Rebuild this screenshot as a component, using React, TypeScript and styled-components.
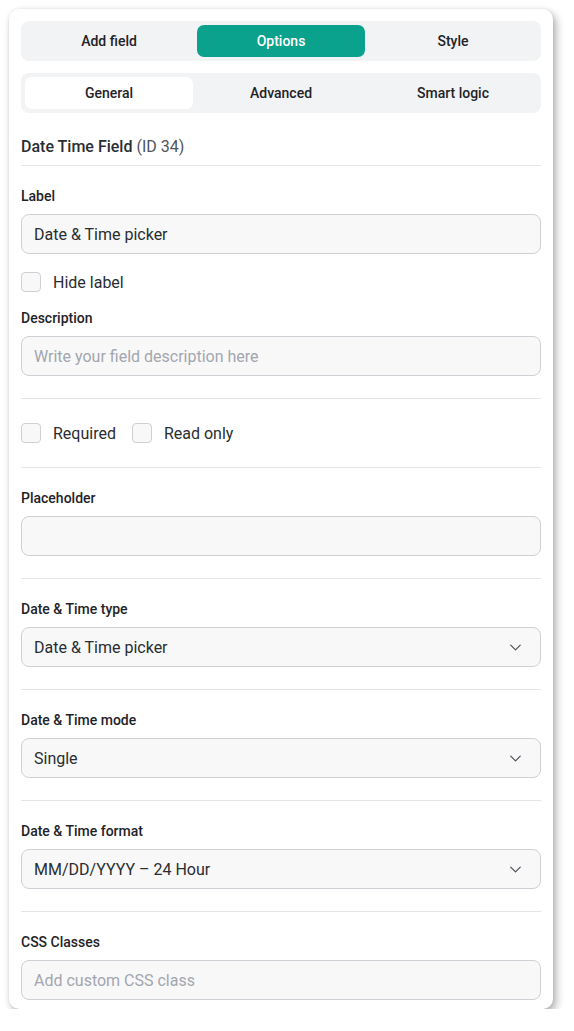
import styled, { createGlobalStyle } from "styled-components";
import { ChevronDown } from "lucide-react";

const GlobalStyle = createGlobalStyle`
  body {
    margin: 0;
    background: #ffffff;
    font-family: Roboto, "Liberation Sans", sans-serif;
    color: #1f2328;
  }
`;

const mainTabs = ["Add field", "Options", "Style"];
const subTabs = ["General", "Advanced", "Smart logic"];

const selects = [
  { label: "Date & Time type", value: "Date & Time picker" },
  { label: "Date & Time mode", value: "Single" },
  { label: "Date & Time format", value: "MM/DD/YYYY – 24 Hour" },
];

const App = () => {
  return (
    <StyledPage>
      <GlobalStyle />
      <StyledCard>
        <StyledTabBar>
          {mainTabs.map((tab) => (
            <StyledTab key={tab} $active={tab === "Options"} $variant="main">
              {tab}
            </StyledTab>
          ))}
        </StyledTabBar>
        <StyledTabBar>
          {subTabs.map((tab) => (
            <StyledTab key={tab} $active={tab === "General"} $variant="sub">
              {tab}
            </StyledTab>
          ))}
        </StyledTabBar>

        <StyledTitle>
          <strong>Date Time Field</strong> (ID 34)
        </StyledTitle>

        <StyledSection>
          <StyledLabel>Label</StyledLabel>
          <StyledInput>Date &amp; Time picker</StyledInput>
          <StyledCheckRow $spaced>
            <StyledCheck>
              <StyledBox />
              Hide label
            </StyledCheck>
          </StyledCheckRow>
          <StyledLabel>Description</StyledLabel>
          <StyledInput $placeholder>Write your field description here</StyledInput>
        </StyledSection>

        <StyledSection $pad={24}>
          <StyledCheckRow>
            <StyledCheck>
              <StyledBox />
              Required
            </StyledCheck>
            <StyledCheck>
              <StyledBox />
              Read only
            </StyledCheck>
          </StyledCheckRow>
        </StyledSection>

        <StyledSection>
          <StyledLabel>Placeholder</StyledLabel>
          <StyledInput />
        </StyledSection>

        {selects.map((item) => (
          <StyledSection key={item.label}>
            <StyledLabel>{item.label}</StyledLabel>
            <StyledInput>
              <span>{item.value}</span>
              <ChevronDown size={19} strokeWidth={1.5} color="#4b5058" />
            </StyledInput>
          </StyledSection>
        ))}

        <StyledSection $last>
          <StyledLabel>CSS Classes</StyledLabel>
          <StyledInput $placeholder>Add custom CSS class</StyledInput>
        </StyledSection>
      </StyledCard>
    </StyledPage>
  );
};

const StyledPage = styled.div`
  padding: 9px 0 0 9px;
`;

const StyledCard = styled.div`
  width: 520px;
  padding: 12px 12px 9px;
  background: #ffffff;
  border-radius: 10px;
  box-shadow: 3px 4px 8px rgba(0, 0, 0, 0.32), 0 0 3px rgba(0, 0, 0, 0.08);
`;

const StyledTabBar = styled.div`
  display: grid;
  grid-template-columns: repeat(3, 1fr);
  gap: 4px;
  padding: 4px;
  margin-bottom: 12px;
  background: #f2f3f5;
  border-radius: 8px;
`;

const StyledTab = styled.div<{ $active?: boolean; $variant: "main" | "sub" }>`
  display: flex;
  align-items: center;
  justify-content: center;
  height: 32px;
  border-radius: 7px;
  font-size: 14px;
  font-weight: 500;
  color: ${({ $active, $variant }) => ($active && $variant === "main" ? "#ffffff" : "#1f2328")};
  background: ${({ $active, $variant }) =>
    !$active ? "transparent" : $variant === "main" ? "#0aa18d" : "#ffffff"};
`;

const StyledTitle = styled.div`
  margin-top: 24px;
  padding-bottom: 8px;
  border-bottom: 1px solid #e3e4e7;
  font-size: 16px;
  line-height: 20px;
  color: #505358;

  strong {
    font-weight: 500;
    color: #2a2d31;
  }
`;

const StyledSection = styled.div<{ $pad?: number; $last?: boolean }>`
  display: flex;
  flex-direction: column;
  padding: ${({ $pad, $last }) => ($last ? "22px 0 0" : `${$pad ?? 22}px 0`)};
  border-bottom: ${({ $last }) => ($last ? "none" : "1px solid #e3e4e7")};
`;

const StyledLabel = styled.div`
  font-size: 14px;
  font-weight: 500;
  line-height: 17px;
  margin-bottom: 9px;
  color: #1f2328;
`;

const StyledInput = styled.div<{ $placeholder?: boolean }>`
  display: flex;
  align-items: center;
  justify-content: space-between;
  box-sizing: border-box;
  height: 40px;
  padding: 0 15px 0 12px;
  background: #f8f8f9;
  border: 1px solid #cfd0d6;
  border-radius: 8px;
  font-size: 16px;
  color: ${({ $placeholder }) => ($placeholder ? "#a3a6ad" : "#2a2d31")};
`;

const StyledCheckRow = styled.div<{ $spaced?: boolean }>`
  display: flex;
  gap: 16px;
  margin: ${({ $spaced }) => ($spaced ? "18px 0 18px" : "0")};
`;

const StyledCheck = styled.label`
  display: flex;
  align-items: center;
  gap: 12px;
  height: 20px;
  font-size: 16px;
  color: #2a2d31;
`;

const StyledBox = styled.span`
  box-sizing: border-box;
  width: 20px;
  height: 20px;
  border: 1px solid #cfd0d6;
  border-radius: 4px;
  background: #f8f8f9;
`;

export default App;
